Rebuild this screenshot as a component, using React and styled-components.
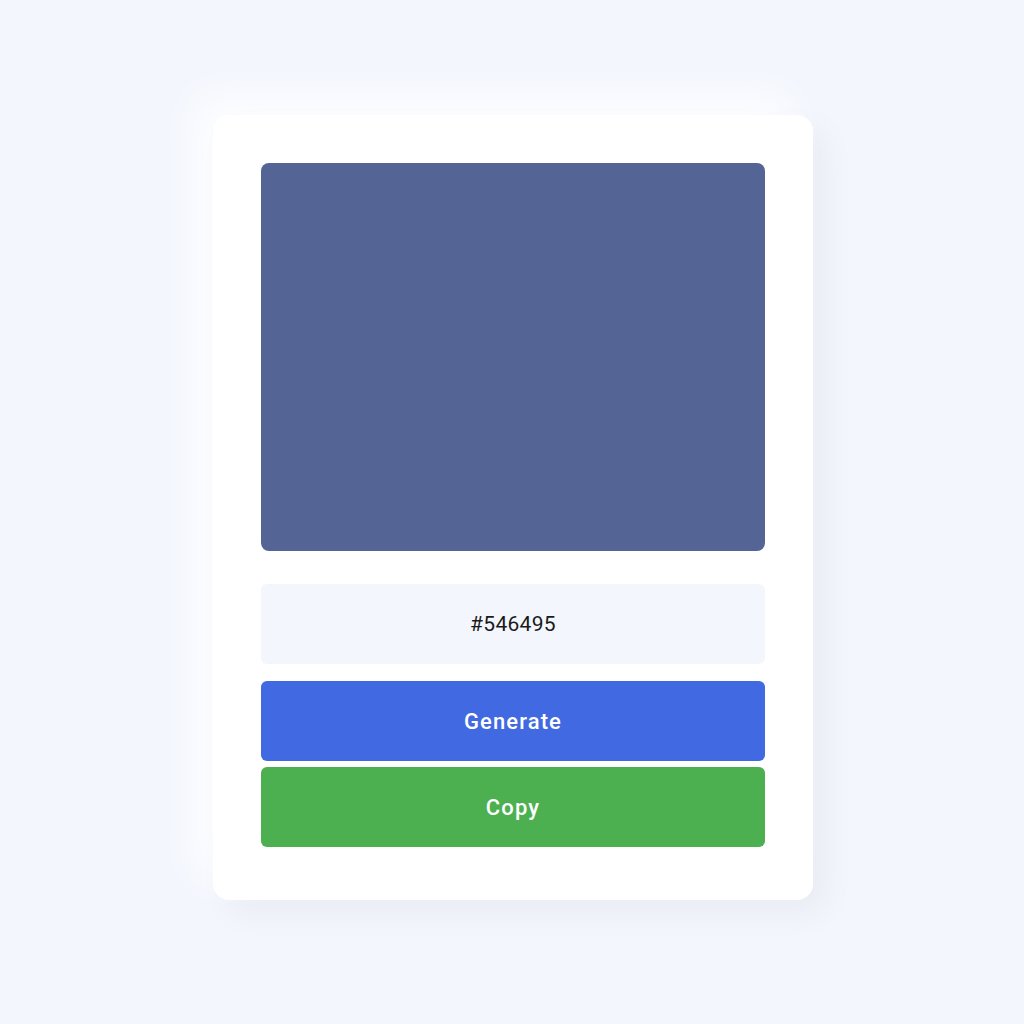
import React, { useState } from 'react'
import styled, { createGlobalStyle } from 'styled-components'

const GlobalStyle = createGlobalStyle`
  * { box-sizing: border-box; }
  body {
    margin: 0;
    background: #f3f6fd;
    font-family: Roboto, "Liberation Sans", sans-serif;
  }
`

const Page = styled.div`
  display: flex;
  justify-content: center;
  align-items: flex-start;
  min-height: 1024px;
  padding: 115px 0 0 2px;
`

const Card = styled.div`
  width: 600px;
  background: #ffffff;
  border-radius: 16px;
  padding: 48px 48px 53px;
  box-shadow: 14px 14px 32px rgba(0, 0, 0, 0.045), -20px -20px 40px rgba(255, 255, 255, 0.85);
  display: flex;
  flex-direction: column;
`

const Swatch = styled.div`
  height: 388px;
  border-radius: 8px;
  background: ${(p) => p.color};
`

const HexBox = styled.div`
  margin-top: 33px;
  height: 80px;
  border-radius: 6px;
  background: #f3f6fd;
  display: flex;
  align-items: center;
  justify-content: center;
  font-size: 21px;
  letter-spacing: 0.3px;
  color: #1a1a1a;
`

const Button = styled.button`
  height: 80px;
  margin-top: ${(p) => p.gap}px;
  border: none;
  border-radius: 6px;
  background: ${(p) => p.bg};
  color: #ffffff;
  font-family: Roboto, "Liberation Sans", sans-serif;
  font-size: 22px;
  font-weight: 500;
  letter-spacing: 1.1px;
  cursor: pointer;
`

export default function App() {
  const [color, setColor] = useState('#546495')

  const generate = () => {
    const c = '#' + Math.floor(Math.random() * 0xffffff).toString(16).padStart(6, '0').toUpperCase()
    setColor(c)
  }

  return (
    <>
      <GlobalStyle />
      <Page>
        <Card>
          <Swatch color={color} />
          <HexBox>{color}</HexBox>
          <Button gap={17} bg="#4169e1" onClick={generate}>Generate</Button>
          <Button gap={6} bg="#4caf50" onClick={() => navigator.clipboard && navigator.clipboard.writeText(color)}>Copy</Button>
        </Card>
      </Page>
    </>
  )
}
